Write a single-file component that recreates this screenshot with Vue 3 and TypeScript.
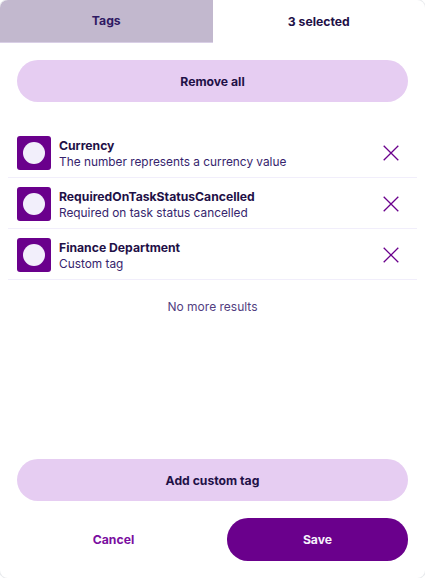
<script setup lang="ts">
interface Tag { name: string; desc: string }
const tags: Tag[] = [
  { name: 'Currency', desc: 'The number represents a currency value' },
  { name: 'RequiredOnTaskStatusCancelled', desc: 'Required on task status cancelled' },
  { name: 'Finance Department', desc: 'Custom tag' },
]
</script>

<template>
  <div class="dialog">
    <div class="tabs">
      <div class="tab inactive">Tags</div>
      <div class="tab">3 selected</div>
    </div>
    <div class="top">
      <button class="pill light">Remove all</button>
    </div>
    <ul class="list">
      <li v-for="t in tags" :key="t.name" class="row">
        <span class="avatar"><span class="dot"></span></span>
        <span class="text">
          <span class="name">{{ t.name }}</span>
          <span class="desc">{{ t.desc }}</span>
        </span>
        <svg class="x" width="16" height="16" viewBox="0 0 16 16" fill="none" stroke="#6a008c" stroke-width="1.3">
          <path d="M.7.7 15.3 15.3M15.3.7.7 15.3" />
        </svg>
      </li>
    </ul>
    <div class="empty">No more results</div>
    <div class="spacer"></div>
    <div class="bottom">
      <button class="pill light">Add custom tag</button>
      <div class="actions">
        <button class="cancel">Cancel</button>
        <button class="pill save">Save</button>
      </div>
    </div>
  </div>
</template>

<style>
html, body { margin: 0; background: #fff; }
</style>

<style scoped>
.dialog {
  width: 425px;
  height: 578px;
  display: flex;
  flex-direction: column;
  background: #fff;
  border-radius: 8px;
  overflow: hidden;
  box-shadow: 0 0 0 1px #e9ebee;
  font-family: Inter, "Liberation Sans", sans-serif;
  color: #1f1147;
}
.tabs { display: flex; height: 43px; flex: none; }
.tab {
  flex: 1;
  display: flex;
  align-items: center;
  justify-content: center;
  font-size: 12.2px;
  font-weight: 700;
  color: #1f1147;
  padding-bottom: 1px;
  box-sizing: border-box;
}
.inactive {
  background: #c2b8ce;
  color: #2f1a63;
  border-bottom: 1px solid #d9cfe6;
}
.top { padding: 17px 17px 0; }
.pill {
  display: block;
  width: 100%;
  height: 42px;
  border: 0;
  border-radius: 21px;
  font: inherit;
  font-size: 12.2px;
  font-weight: 700;
  color: #1f1147;
  padding: 0;
}
.light { background: #e6cdf2; }
.list { list-style: none; margin: 25px 8px 0; padding: 0; }
.row {
  display: flex;
  align-items: center;
  height: 51px;
  padding: 2px 18px 0 9px;
  box-sizing: border-box;
  border-bottom: 1.5px solid #f1eefb;
}
.avatar {
  width: 34px;
  height: 34px;
  border-radius: 3px;
  background: #6a008c;
  display: flex;
  align-items: center;
  justify-content: center;
  flex: none;
}
.dot { width: 22px; height: 22px; border-radius: 50%; background: #f2effb; }
.text { flex: 1; display: flex; flex-direction: column; margin-left: 8px; min-width: 0; padding-top: 1px; }
.name { font-size: 12.2px; font-weight: 700; line-height: 17px; }
.desc { font-size: 11.85px; line-height: 17px; color: #36246d; }
.x { flex: none; }
.empty {
  margin-top: 18px;
  text-align: center;
  font-size: 12px;
  line-height: 17px;
  color: #52407f;
}
.spacer { flex: 1; }
.bottom { padding: 0 17px 17px; }
.actions { display: flex; align-items: center; gap: 17px; margin-top: 17px; }
.cancel {
  flex: 1;
  height: 43px;
  border: 0;
  background: none;
  font: inherit;
  font-size: 12.2px;
  font-weight: 700;
  color: #7a0ea0;
  padding: 0;
}
.save {
  flex: 0 0 181px;
  width: 181px;
  height: 43px;
  background: #6a008c;
  color: #f5f0fb;
}
</style>
